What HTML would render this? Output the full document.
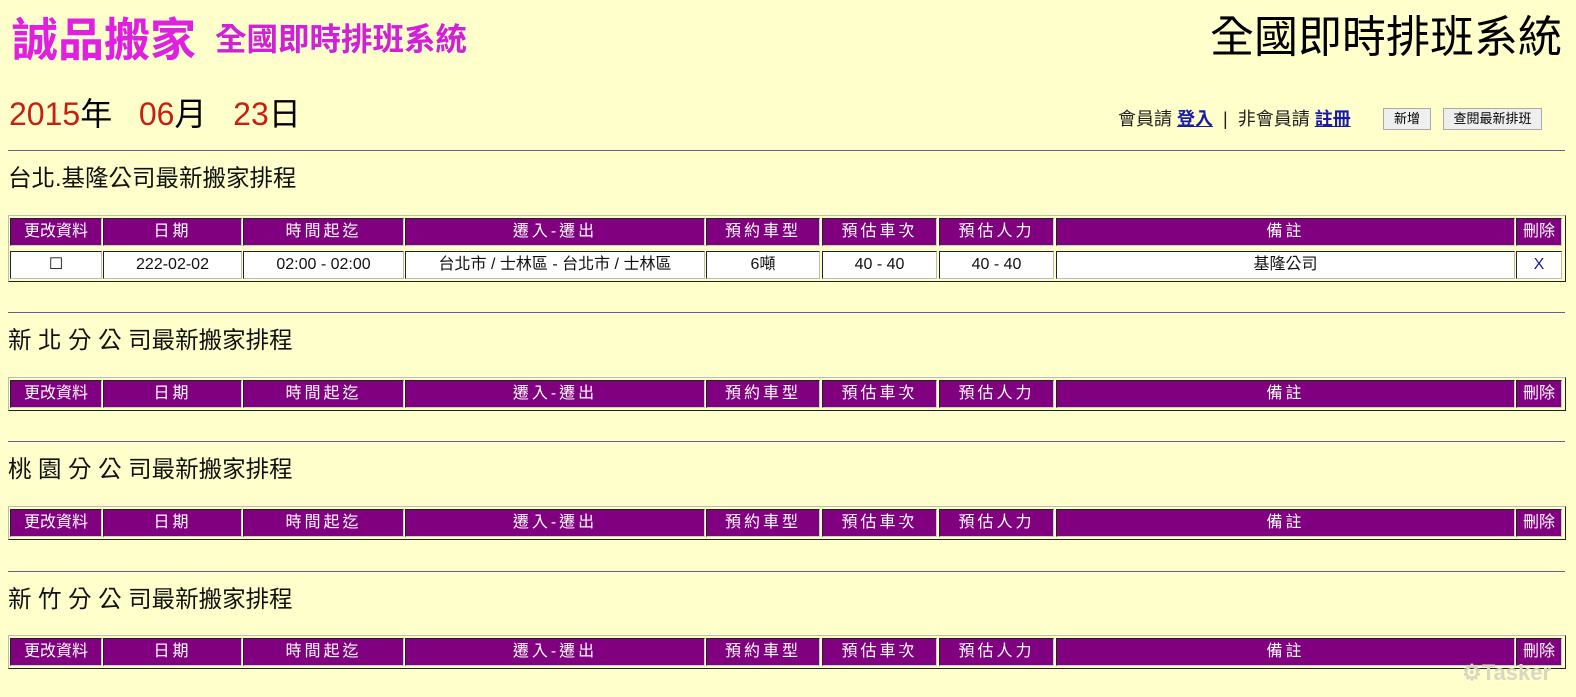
<!DOCTYPE html>
<html><head><meta charset="utf-8"><style>
body{margin:0;width:1576px;height:697px;background:#ffffcc;position:relative;overflow:hidden;font-family:"Liberation Sans","Noto Sans CJK TC",sans-serif;}
.a{position:absolute;white-space:nowrap}
.hr{position:absolute;left:8px;width:1557px;height:0;border-top:1px solid #666;border-bottom:1px solid #fff}
.tb{position:absolute;left:8px;width:1556px;border:1px solid;border-color:#bbb #222 #222 #bbb}
.c{position:absolute;box-sizing:border-box;text-align:center;font-size:16px;border:1px solid;}
.h{background:#800080;color:#fff;border-color:#222 #ccc #ccc #222;letter-spacing:3px}
.d{background:#fff;color:#111;border-color:#222 #bbb #bbb #222}
.btn{position:absolute;top:108px;height:22px;box-sizing:border-box;border:1px solid #aaa;background:#efefef;font-size:13px;line-height:20px;text-align:center;color:#000}
.t{font-size:23.5px;line-height:28px;color:#111;left:8px}
</style></head><body>
<div class="a" style="left:12px;top:12px;font-size:46px;font-weight:bold;color:#e020e0;line-height:56px">誠品搬家</div>
<div class="a" style="left:215px;top:19px;font-size:31.5px;font-weight:bold;color:#d020d8;line-height:40px">全國即時排班系統</div>
<div class="a" style="right:14px;top:10px;font-size:44px;color:#000;line-height:56px">全國即時排班系統</div>
<div class="a" style="left:9px;top:94px;font-size:32px;line-height:40px;color:#000"><span style="color:#c82010">2015</span>年&nbsp;&nbsp;&nbsp;<span style="color:#c82010">06</span>月&nbsp;&nbsp;&nbsp;<span style="color:#c82010">23</span>日</div>
<div class="a" style="left:1118px;top:108px;font-size:18px;line-height:22px;color:#222">會員請 <u style="color:#1a1aa8;font-weight:bold">登入</u> &nbsp;| &nbsp;非會員請 <u style="color:#1a1aa8;font-weight:bold">註冊</u></div>
<div class="btn" style="left:1383px;width:48px">新增</div>
<div class="btn" style="left:1443px;width:99px">查閱最新排班</div>

<div class="hr" style="top:150px"></div>
<div class="a t" style="top:164px">台北.基隆公司最新搬家排程</div>
<div class="tb" style="top:215px;height:65px"></div>
<div class="c h" style="left:10px;top:218px;width:92px;height:28px;line-height:26px;letter-spacing:0">更改資料</div>
<div class="c h" style="left:103px;top:218px;width:139px;height:28px;line-height:26px">日期</div>
<div class="c h" style="left:243px;top:218px;width:161px;height:28px;line-height:26px">時間起迄</div>
<div class="c h" style="left:405px;top:218px;width:300px;height:28px;line-height:26px">遷入-遷出</div>
<div class="c h" style="left:706px;top:218px;width:114px;height:28px;line-height:26px">預約車型</div>
<div class="c h" style="left:822px;top:218px;width:115px;height:28px;line-height:26px">預估車次</div>
<div class="c h" style="left:939px;top:218px;width:115px;height:28px;line-height:26px">預估人力</div>
<div class="c h" style="left:1056px;top:218px;width:459px;height:28px;line-height:26px">備註</div>
<div class="c h" style="left:1516px;top:218px;width:46px;height:28px;line-height:26px;letter-spacing:0">刪除</div>
<div class="c d" style="left:10px;top:251px;width:92px;height:28px;line-height:26px">☐</div>
<div class="c d" style="left:103px;top:251px;width:139px;height:28px;line-height:26px">222-02-02</div>
<div class="c d" style="left:243px;top:251px;width:161px;height:28px;line-height:26px">02:00 - 02:00</div>
<div class="c d" style="left:405px;top:251px;width:300px;height:28px;line-height:26px">台北市 / 士林區 - 台北市 / 士林區</div>
<div class="c d" style="left:706px;top:251px;width:114px;height:28px;line-height:26px">6噸</div>
<div class="c d" style="left:822px;top:251px;width:115px;height:28px;line-height:26px">40 - 40</div>
<div class="c d" style="left:939px;top:251px;width:115px;height:28px;line-height:26px">40 - 40</div>
<div class="c d" style="left:1056px;top:251px;width:459px;height:28px;line-height:26px">基隆公司</div>
<div class="c d" style="left:1516px;top:251px;width:46px;height:28px;line-height:26px;color:#1a1aa8">X</div>

<div class="hr" style="top:312px"></div>
<div class="a t" style="top:326px">新 北 分 公 司最新搬家排程</div>
<div class="tb" style="top:377px;height:32px"></div>
<div class="c h" style="left:10px;top:380px;width:92px;height:28px;line-height:26px;letter-spacing:0">更改資料</div>
<div class="c h" style="left:103px;top:380px;width:139px;height:28px;line-height:26px">日期</div>
<div class="c h" style="left:243px;top:380px;width:161px;height:28px;line-height:26px">時間起迄</div>
<div class="c h" style="left:405px;top:380px;width:300px;height:28px;line-height:26px">遷入-遷出</div>
<div class="c h" style="left:706px;top:380px;width:114px;height:28px;line-height:26px">預約車型</div>
<div class="c h" style="left:822px;top:380px;width:115px;height:28px;line-height:26px">預估車次</div>
<div class="c h" style="left:939px;top:380px;width:115px;height:28px;line-height:26px">預估人力</div>
<div class="c h" style="left:1056px;top:380px;width:459px;height:28px;line-height:26px">備註</div>
<div class="c h" style="left:1516px;top:380px;width:46px;height:28px;line-height:26px;letter-spacing:0">刪除</div>

<div class="hr" style="top:441px"></div>
<div class="a t" style="top:455px">桃 園 分 公 司最新搬家排程</div>
<div class="tb" style="top:506px;height:32px"></div>
<div class="c h" style="left:10px;top:509px;width:92px;height:28px;line-height:26px;letter-spacing:0">更改資料</div>
<div class="c h" style="left:103px;top:509px;width:139px;height:28px;line-height:26px">日期</div>
<div class="c h" style="left:243px;top:509px;width:161px;height:28px;line-height:26px">時間起迄</div>
<div class="c h" style="left:405px;top:509px;width:300px;height:28px;line-height:26px">遷入-遷出</div>
<div class="c h" style="left:706px;top:509px;width:114px;height:28px;line-height:26px">預約車型</div>
<div class="c h" style="left:822px;top:509px;width:115px;height:28px;line-height:26px">預估車次</div>
<div class="c h" style="left:939px;top:509px;width:115px;height:28px;line-height:26px">預估人力</div>
<div class="c h" style="left:1056px;top:509px;width:459px;height:28px;line-height:26px">備註</div>
<div class="c h" style="left:1516px;top:509px;width:46px;height:28px;line-height:26px;letter-spacing:0">刪除</div>

<div class="hr" style="top:571px"></div>
<div class="a t" style="top:585px">新 竹 分 公 司最新搬家排程</div>
<div class="tb" style="top:635px;height:32px"></div>
<div class="c h" style="left:10px;top:638px;width:92px;height:28px;line-height:26px;letter-spacing:0">更改資料</div>
<div class="c h" style="left:103px;top:638px;width:139px;height:28px;line-height:26px">日期</div>
<div class="c h" style="left:243px;top:638px;width:161px;height:28px;line-height:26px">時間起迄</div>
<div class="c h" style="left:405px;top:638px;width:300px;height:28px;line-height:26px">遷入-遷出</div>
<div class="c h" style="left:706px;top:638px;width:114px;height:28px;line-height:26px">預約車型</div>
<div class="c h" style="left:822px;top:638px;width:115px;height:28px;line-height:26px">預估車次</div>
<div class="c h" style="left:939px;top:638px;width:115px;height:28px;line-height:26px">預估人力</div>
<div class="c h" style="left:1056px;top:638px;width:459px;height:28px;line-height:26px">備註</div>
<div class="c h" style="left:1516px;top:638px;width:46px;height:28px;line-height:26px;letter-spacing:0">刪除</div>
<div class="a" style="left:1462px;top:660px;font-size:22px;font-weight:bold;color:#d8d8c0;line-height:26px">⚙Tasker</div>
</body></html>
